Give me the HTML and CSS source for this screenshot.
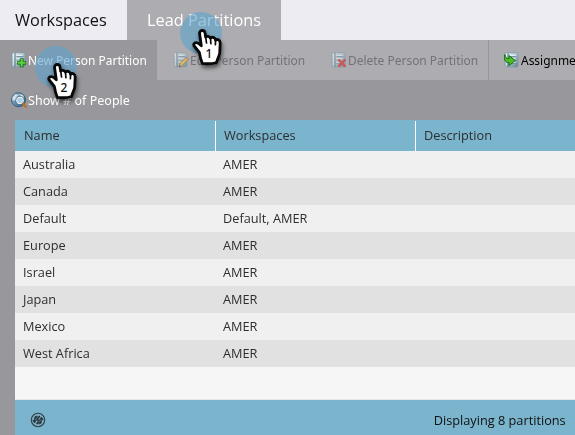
FILE: index.html
```html
<!DOCTYPE html>
<html lang="en">
<head>
<meta charset="utf-8">
<title>Lead Partitions</title>
<link rel="stylesheet" href="styles.css">
</head>
<body>
<svg class="defs" width="0" height="0">
  <defs>
    <linearGradient id="steel" x2="1" y2="1"><stop stop-color="#eaf4f8"/><stop offset=".55" stop-color="#a9bfc9"/><stop offset="1" stop-color="#607f91"/></linearGradient>
    <linearGradient id="globe" x2="1" y2="1"><stop stop-color="#a6c7dc"/><stop offset="1" stop-color="#245b87"/></linearGradient>
    <symbol id="server" viewBox="0 0 16 16">
      <rect x="1" y=".7" width="13" height="14.3" rx="1.5" fill="url(#steel)" stroke="#7795a4" stroke-width=".7"/>
      <path d="M4 1v14" stroke="#58788a"/>
      <path d="M5.5 4.5h7M5.5 8h7M5.5 11.5h7" stroke="#718e9c" stroke-width=".9"/>
      <path d="M5.5 3.3h6M5.5 6.8h6M5.5 10.3h6" stroke="#f3fafc"/>
      <path d="M2 3h1M2 6h1M2 9h1M2 12h1" stroke="#fff"/>
    </symbol>
    <symbol id="hand" viewBox="0 0 30 37">
      <path d="M10.4 1.5C8.5 1.5 7.4 2.8 7.6 4.8L9.3 16.8L7 14.7C5.2 13.1 2.7 13.2 1.9 14.8C1.4 15.9 2 17 3 18L7.3 23.3L8.3 28C8.8 30.5 9.7 32 10.2 34.3Q18 35.5 24.6 33.5C24.7 30.8 27.5 27.2 27.7 24L28.2 14C28.2 10.7 25 9.8 23.6 11.3C23.1 8.1 19.7 7.5 18.4 9.2C17.2 7 14.7 6.9 13.7 8.2L13 3.9C12.8 2.3 11.9 1.5 10.4 1.5Z" fill="#fff" stroke="#080808" stroke-width="2.8" stroke-linejoin="round"/>
      <path d="M13.7 8l.8 6M18.5 9.3l.4 5.4M23.5 11.3l-.1 4.4" fill="none" stroke="#080808" stroke-width="1.7" stroke-linecap="round"/>
    </symbol>
  </defs>
</svg>

<main class="app">
  <nav class="tabs">
    <div class="tab tab-plain"><span>Workspaces</span></div>
    <div class="tab tab-active"><span>Lead Partitions</span></div>
  </nav>

  <div class="toolbar">
    <div class="tool tool-new">
      <svg class="icon" viewBox="0 0 16 16"><use href="#server"/><path d="M10.7 6.3v9M6.2 10.8h9" stroke="#18791b" stroke-width="3.8"/><path d="M10.7 7v7.6M6.9 10.8h7.6" stroke="#65cf43" stroke-width="1.9"/></svg>
      <span>New Person Partition</span>
    </div>
    <div class="tool tool-edit disabled">
      <svg class="icon" viewBox="0 0 16 16"><use href="#server"/><path d="M6 15l1-3.5 6.5-6.5 2 2L9 13.7z" fill="#f2c332" stroke="#896a31" stroke-width=".8"/><path d="M6 15l.6-2 1.4 1.3z" fill="#333"/><path d="M13 5.5l2 2" stroke="#d87777" stroke-width="1.4"/></svg>
      <span>Edit Person Partition</span>
    </div>
    <div class="tool tool-delete disabled">
      <svg class="icon" viewBox="0 0 16 16"><use href="#server"/><path d="M7.3 7.5l7.2 7.2M14.5 7.5l-7.2 7.2" stroke="#d52d2d" stroke-width="2.4"/></svg>
      <span>Delete Person Partition</span>
    </div>
    <div class="tool tool-assign">
      <svg class="icon" viewBox="0 0 16 16"><use href="#server"/><path d="M1 2.5c0 3 1.4 4.2 4 4V3.6l6.3 5-6.3 5v-3C1.3 10.8-.8 7 1 2.5z" fill="#4fbd25" stroke="#146d19"/></svg>
      <span>Assignment Rules</span>
    </div>
  </div>

  <div class="subbar">
    <svg class="icon" viewBox="0 0 16 16"><circle cx="7.5" cy="7.8" r="7" fill="url(#globe)" stroke="#38627c"/><path d="M1.5 5l3-3 3 1-2 2-1 4-3-1zM8 2l4 1 1 3-3-1z" fill="#cfe0e8"/><circle cx="9" cy="8.5" r="3.4" fill="#a9d0e6" stroke="#eef4f5" stroke-width="1.2"/><circle cx="9" cy="8.5" r="4.3" fill="none" stroke="#36566a" stroke-width=".7"/><path d="M11.8 11.5l3.3 3.5" stroke="#b87027" stroke-width="2.1" stroke-linecap="round"/></svg>
    <span>Show # of People</span>
  </div>

  <section class="grid">
    <div class="row head"><div><span>Name</span></div><div><span>Workspaces</span></div><div><span>Description</span></div></div>
    <div class="row"><div><span>Australia</span></div><div><span>AMER</span></div><div></div></div>
    <div class="row"><div><span>Canada</span></div><div><span>AMER</span></div><div></div></div>
    <div class="row"><div><span>Default</span></div><div><span>Default, AMER</span></div><div></div></div>
    <div class="row"><div><span>Europe</span></div><div><span>AMER</span></div><div></div></div>
    <div class="row"><div><span>Israel</span></div><div><span>AMER</span></div><div></div></div>
    <div class="row"><div><span>Japan</span></div><div><span>AMER</span></div><div></div></div>
    <div class="row"><div><span>Mexico</span></div><div><span>AMER</span></div><div></div></div>
    <div class="row"><div><span>West Africa</span></div><div><span>AMER</span></div><div></div></div>
    <div class="blank"></div>
    <footer class="footer">
      <svg class="refresh" viewBox="0 0 16 16"><circle cx="8" cy="8" r="6.7" fill="none" stroke="#343f44" stroke-width="1.1"/><path d="M8 4.2H6.2Q4.5 4.2 4.5 6.2V8.5M2.7 8.2h3.8L4.6 11zM8 11.8h1.8q1.7 0 1.7-2V7.5M13.3 7.8H9.5L11.4 5z" fill="#283136" stroke="#283136" stroke-width=".6"/><path d="M9.8 4L7 7.4l2 1.3-2.4 3.4" fill="none" stroke="#283136" stroke-width="1.5"/></svg>
      <span>Displaying 8 partitions</span>
    </footer>
  </section>

  <div class="pointer pointer-one"><i class="halo"></i><svg class="hand"><use href="#hand"/></svg><b>1</b></div>
  <div class="pointer pointer-two"><i class="halo"></i><svg class="hand"><use href="#hand"/></svg><b>2</b></div>
</main>
</body>
</html>
```

FILE: styles.css
```css
* { box-sizing: border-box; }
body { margin: 0; font-family: "Open Sans", "Noto Sans", sans-serif; color: #2e2e2e; }
.defs { position: absolute; }
.app { position: relative; display: flex; flex-direction: column; width: 575px; height: 435px; overflow: hidden; background: #98979b; }

/* Slightly condensed labels */
.tab span, .tool span, .subbar span, .row span, .footer span { display: inline-block; transform-origin: left center; }
.tab span { transform: scaleX(.96); }
.tool span { transform: scaleX(.92); }
.subbar span { transform: scaleX(.965); }
.row span { transform: scaleX(.98); }
.footer span { transform: scaleX(.98); transform-origin: right center; }

.tabs { display: flex; height: 40px; background: #edecf2; }
.tab { display: flex; align-items: center; font-size: 17px; line-height: 24px; white-space: nowrap; color: #111; }
.tab-plain { width: 127px; padding-left: 15px; }
.tab-active { width: 154px; padding-left: 20px; background: #adacb0; color: #fff; }

.toolbar { display: flex; height: 40px; background: #adacb0; }
.tool { display: flex; align-items: center; gap: 1px; flex: none; font-family: "Noto Sans", sans-serif; font-size: 13px; white-space: nowrap; color: #000; }
.icon { width: 16px; height: 16px; flex: none; }
.tool-new { width: 157px; padding-left: 11px; background: #98979b; color: #fff; }
.tool-edit { width: 158px; padding-left: 16px; }
.tool-delete { width: 174px; padding-left: 16px; border-right: 1px solid #98979b; }
.tool-assign { padding-left: 15px; }
.disabled { color: #737276; }
.disabled .icon { opacity: .65; }

.subbar { display: flex; align-items: center; gap: 1px; height: 40px; padding-left: 11px; font-family: "Noto Sans", sans-serif; font-size: 13px; color: #fff; }

.grid { display: flex; flex-direction: column; width: 560px; height: 315px; margin-left: 15px; font-size: 13px; }
.row { display: grid; grid-template-columns: 200px 200px 160px; height: 27px; flex: none; background: #f0f0f0; }
.row:nth-child(odd) { background: #e1e1e1; }
.row > div { padding-left: 8px; line-height: 27px; white-space: nowrap; }
.row.head { height: 31px; background: #7ab4cd; }
.head > div { height: 30px; padding-left: 9px; line-height: 29px; align-self: end; }
.head > div + div { border-left: 1px solid #fff; padding-left: 8px; }
.blank { height: 33px; background: #f6f6f6; border-bottom: 1px solid #e3e8ea; }
.footer { display: flex; flex: 1; align-items: center; justify-content: space-between; padding: 4px 9px 0 15px; background: #7ab4cd; color: #111; }
.refresh { width: 16px; height: 16px; }

.pointer { position: absolute; width: 50px; height: 58px; }
.pointer-one { left: 180px; top: 12px; }
.pointer-two { left: 35px; top: 46px; }
.halo { position: absolute; left: 0; top: 0; width: 42px; height: 42px; border-radius: 50%; background: rgba(91, 164, 205, .6); }
.hand { position: absolute; left: 12px; top: 17px; width: 30px; height: 37px; overflow: visible; filter: drop-shadow(1px 3px 2px rgba(0, 0, 0, .55)); }
.pointer b { position: absolute; left: 23px; top: 35px; width: 12px; text-align: center; font: 500 12px/14px "Noto Sans", sans-serif; color: #111; }
```
